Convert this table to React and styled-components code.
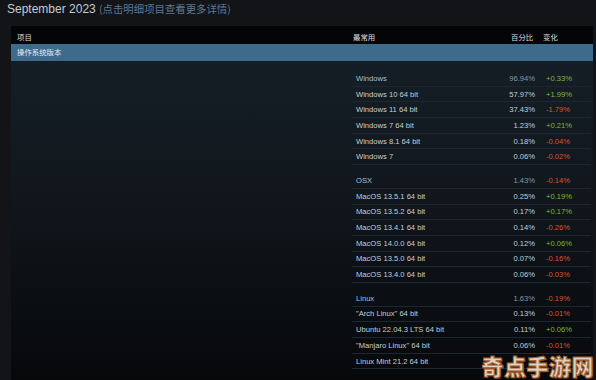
import React from 'react'
import styled, { createGlobalStyle } from 'styled-components'

const GlobalStyle = createGlobalStyle`
    html, body {
        margin: 0;
        padding: 0;
        background: #121418;
        font-family: "Liberation Sans", Arial, "Noto Sans CJK SC", sans-serif;
    }
`

const Page = styled.div`
    position: relative;
    width: 596px;
    height: 380px;
    overflow: hidden;
    background: #121418;
`

const Title = styled.div`
    height: 26px;
    padding-left: 7px;
    padding-top: 1px;
    box-sizing: border-box;
    font-size: 12px;
    line-height: 15px;
    color: #c3ccd5;
`

const TitleNote = styled.span`
    font-family: "Noto Sans CJK SC", sans-serif;
    font-size: 10.4px;
    color: #5d7890;
`

const Table = styled.div`
    margin-left: 11px;
    width: 582px;
    font-family: "Liberation Sans", Arial, "Noto Sans CJK SC", sans-serif;
`

const HeadRow = styled.div`
    display: grid;
    grid-template-columns: 341px 1fr 32px 50px;
    height: 18px;
    background: #040506;
    color: #d9dee3;
    font-size: 7.4px;
    align-items: center;
    padding-top: 2px;
    box-sizing: border-box;
`

const HeadCell = styled.div`
    padding-left: ${p => p.$pad || 0}px;
`

const Section = styled.div`
    height: 17px;
    background: #3e6a8b;
    color: #e8eef3;
    font-size: 7.4px;
    line-height: 17px;
    padding-left: 6px;
`

const Body = styled.div`
    display: grid;
    grid-template-columns: 341px 1fr;
    height: 319px;
    background: linear-gradient(180deg, #151e26 0%, #10161c 45%, #07080a 100%);
`

const Groups = styled.div`
    display: flex;
    flex-direction: column;
    gap: 8px;
    padding-top: 10px;
    padding-right: 2px;
`

const Row = styled.div`
    display: grid;
    grid-template-columns: 1fr 60px 45px;
    column-gap: 11px;
    height: 14.7px;
    padding-left: 4px;
    border-bottom: 1px solid #1d2731;
    align-items: center;
    font-size: 7.6px;
`

const Name = styled.div`
    color: ${p => (p.$group ? '#9dc2de' : '#c5ced6')};
    white-space: nowrap;
`

const Pct = styled.div`
    text-align: right;
    color: ${p => (p.$group ? '#8a96a1' : '#c5ced6')};
`

const Change = styled.div`
    color: ${p => (p.$up ? '#74bd36' : '#d4582d')};
`

const Watermark = styled.div`
    position: absolute;
    right: 2px;
    bottom: 2px;
    font-family: "Noto Sans CJK SC", sans-serif;
    font-weight: 900;
    font-size: 22px;
    line-height: 26px;
    letter-spacing: 0.5px;
    color: #f4e9d8;
    -webkit-text-stroke: 1px #b8652a;
    text-shadow: 1px 1px 0 #6a3a18;
    opacity: 0.9;
`

const groups = [
    {
        name: 'Windows', pct: '96.94%', change: '+0.33%',
        rows: [
            ['Windows 10 64 bit', '57.97%', '+1.99%'],
            ['Windows 11 64 bit', '37.43%', '-1.79%'],
            ['Windows 7 64 bit', '1.23%', '+0.21%'],
            ['Windows 8.1 64 bit', '0.18%', '-0.04%'],
            ['Windows 7', '0.06%', '-0.02%'],
        ],
    },
    {
        name: 'OSX', pct: '1.43%', change: '-0.14%',
        rows: [
            ['MacOS 13.5.1 64 bit', '0.25%', '+0.19%'],
            ['MacOS 13.5.2 64 bit', '0.17%', '+0.17%'],
            ['MacOS 13.4.1 64 bit', '0.14%', '-0.26%'],
            ['MacOS 14.0.0 64 bit', '0.12%', '+0.06%'],
            ['MacOS 13.5.0 64 bit', '0.07%', '-0.16%'],
            ['MacOS 13.4.0 64 bit', '0.06%', '-0.03%'],
        ],
    },
    {
        name: 'Linux', pct: '1.63%', change: '-0.19%',
        rows: [
            ['"Arch Linux" 64 bit', '0.13%', '-0.01%'],
            ['Ubuntu 22.04.3 LTS 64 bit', '0.11%', '+0.06%'],
            ['"Manjaro Linux" 64 bit', '0.06%', '-0.01%'],
            ['Linux Mint 21.2 64 bit', '', ''],
        ],
    },
]

const App = () => {
    return (
        <Page>
            <GlobalStyle />
            <Title>
                September 2023 <TitleNote>(点击明细项目查看更多详情)</TitleNote>
            </Title>
            <Table>
                <HeadRow>
                    <HeadCell $pad={6}>项目</HeadCell>
                    <HeadCell $pad={1}>最常用</HeadCell>
                    <HeadCell>百分比</HeadCell>
                    <HeadCell>变化</HeadCell>
                </HeadRow>
                <Section>操作系统版本</Section>
                <Body>
                    <div />
                    <Groups>
                        {groups.map(g => (
                            <div key={g.name}>
                                <Row>
                                    <Name $group>{g.name}</Name>
                                    <Pct $group>{g.pct}</Pct>
                                    <Change $up={g.change.startsWith('+')}>{g.change}</Change>
                                </Row>
                                {g.rows.map(r => (
                                    <Row key={r[0]}>
                                        <Name>{r[0]}</Name>
                                        <Pct>{r[1]}</Pct>
                                        <Change $up={r[2].startsWith('+')}>{r[2]}</Change>
                                    </Row>
                                ))}
                            </div>
                        ))}
                    </Groups>
                </Body>
            </Table>
            <Watermark>奇点手游网</Watermark>
        </Page>
    )
}

export default App
